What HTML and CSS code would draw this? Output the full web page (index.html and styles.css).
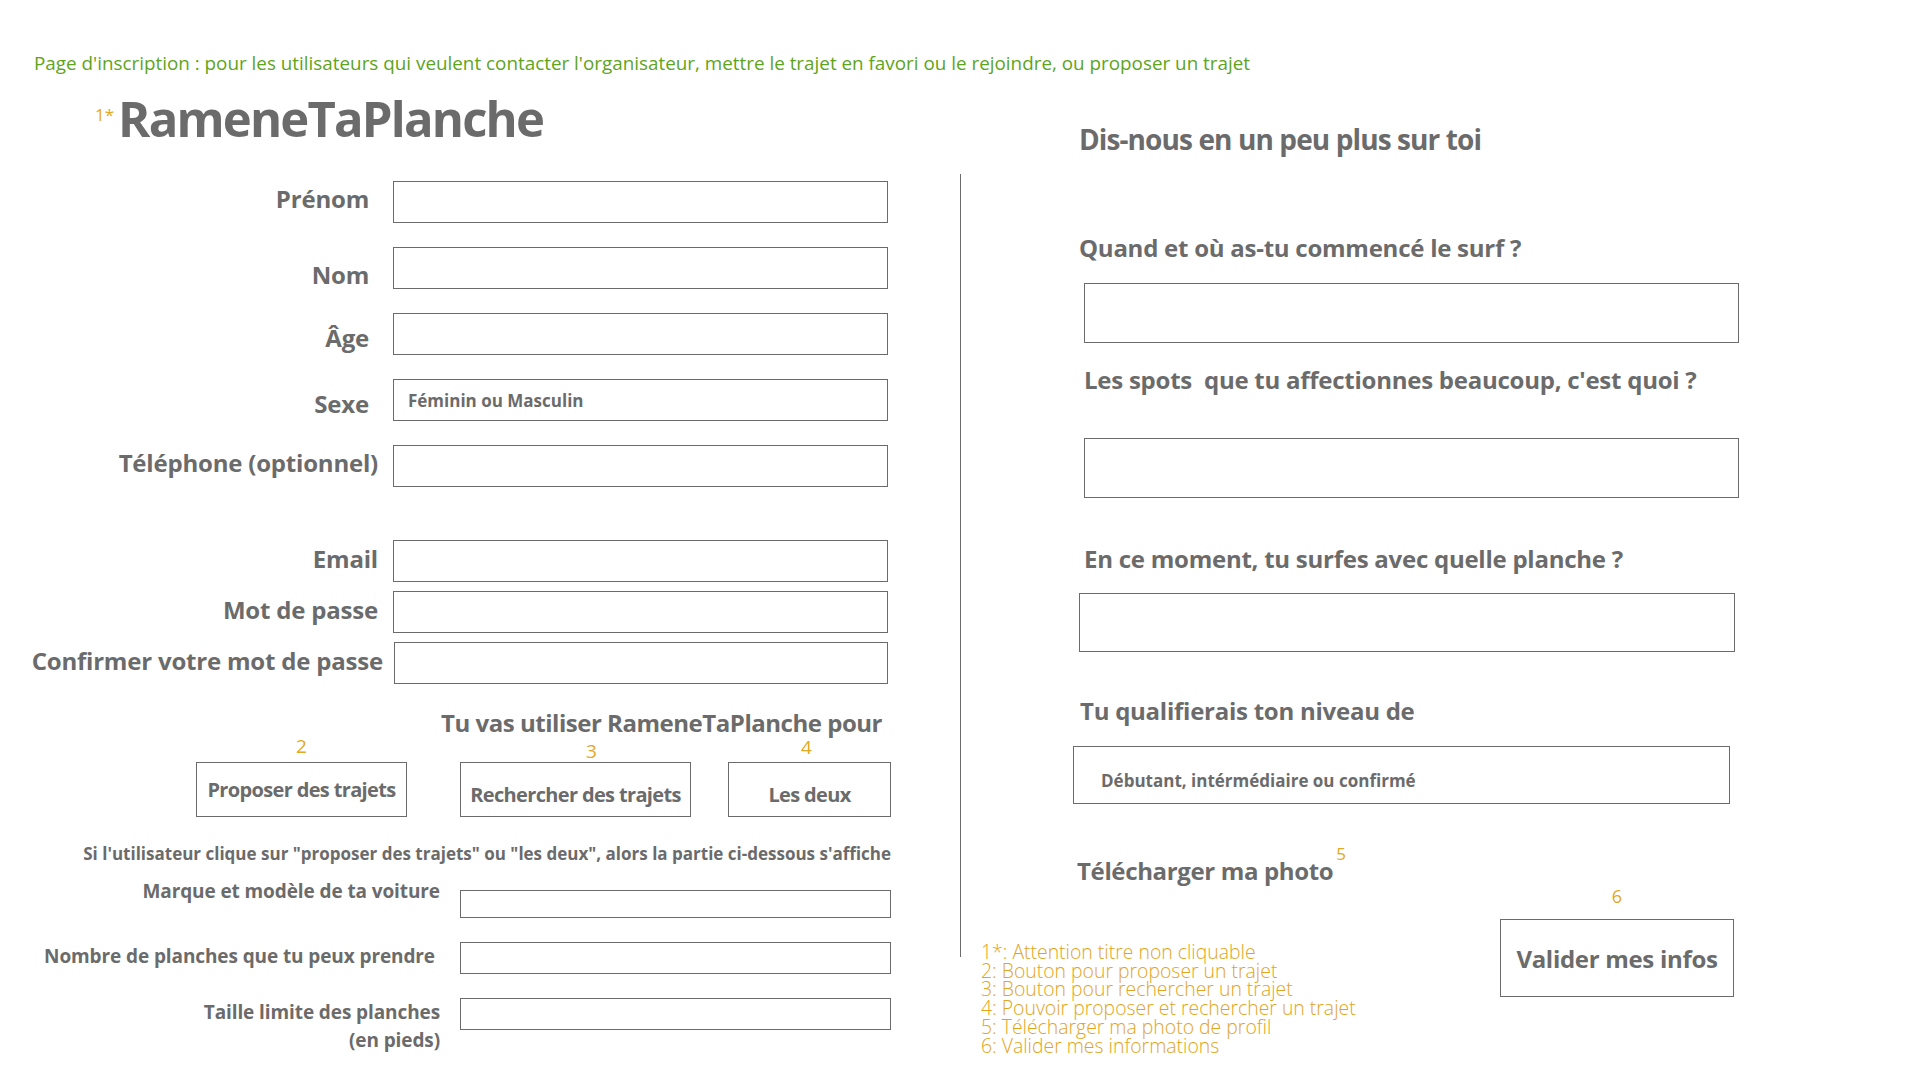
FILE: index.html
```html
<!DOCTYPE html>
<html lang="fr">
<head>
<meta charset="utf-8">
<title>RameneTaPlanche - Inscription</title>
<link rel="stylesheet" href="styles.css">
</head>
<body>
<p class="note">Page d'inscription : pour les utilisateurs qui veulent contacter l'organisateur, mettre le trajet en favori ou le rejoindre, ou proposer un trajet</p>
<main class="page">
  <section class="left">
    <div class="brand">
      <span class="mark brand-mark">1*</span>
      <h1 class="brand-title">RameneTaPlanche</h1>
    </div>

    <div class="fields">
      <div class="row"><span class="lbl">Prénom</span><div class="field"></div></div>
      <div class="row"><span class="lbl lbl-lower">Nom</span><div class="field"></div></div>
      <div class="row"><span class="lbl lbl-low">Âge</span><div class="field"></div></div>
      <div class="row"><span class="lbl lbl-low">Sexe</span><div class="field"><span class="ph">Féminin ou Masculin</span></div></div>
      <div class="row"><span class="lbl lbl-tel">Téléphone (optionnel)</span><div class="field"></div></div>
    </div>

    <div class="fields fields-tight">
      <div class="row"><span class="lbl lbl-wide">Email</span><div class="field"></div></div>
      <div class="row"><span class="lbl lbl-wide">Mot de passe</span><div class="field"></div></div>
      <div class="row"><span class="lbl lbl-wide lbl-confirm">Confirmer votre mot de passe</span><div class="field field-confirm"></div></div>
    </div>

    <h2 class="usage">Tu vas utiliser RameneTaPlanche pour</h2>

    <div class="choices">
      <div class="choice choice-1">
        <span class="mark num num-1">2</span>
        <div class="btn btn-1">Proposer des trajets</div>
      </div>
      <div class="choice choice-2">
        <span class="mark num num-2">3</span>
        <div class="btn btn-2">Rechercher des trajets</div>
      </div>
      <div class="choice choice-3">
        <span class="mark num num-3">4</span>
        <div class="btn btn-3">Les deux</div>
      </div>
    </div>

    <p class="hint">Si l'utilisateur clique sur "proposer des trajets" ou "les deux", alors la partie ci-dessous s'affiche</p>

    <div class="car">
      <div class="car-row car-row-1"><span class="car-lbl">Marque et modèle de ta voiture</span><div class="field car-field car-field-1"></div></div>
      <div class="car-row"><span class="car-lbl car-lbl-2">Nombre de planches que tu peux prendre</span><div class="field car-field"></div></div>
      <div class="car-row"><span class="car-lbl">Taille limite des planches<br>(en pieds)</span><div class="field car-field"></div></div>
    </div>
  </section>

  <div class="sep"></div>

  <section class="right">
    <h2 class="r-title">Dis-nous en un peu plus sur toi</h2>

    <h3 class="q q-1">Quand et où as-tu commencé le surf ?</h3>
    <div class="field big big-1"></div>

    <h3 class="q q-2">Les spots&nbsp; que tu affectionnes beaucoup, c'est quoi ?</h3>
    <div class="field big big-2"></div>

    <h3 class="q q-3">En ce moment, tu surfes avec quelle planche ?</h3>
    <div class="field big big-3"></div>

    <h3 class="q q-4">Tu qualifierais ton niveau de</h3>
    <div class="field big big-4"><span class="ph ph-level">Débutant, intérmédiaire ou confirmé</span></div>

    <div class="photo">
      <h3 class="photo-title">Télécharger ma photo</h3>
      <span class="mark photo-mark">5</span>
    </div>

    <div class="bottom">
      <ul class="legend">
        <li>1*: Attention titre non cliquable</li>
        <li>2: Bouton pour proposer un trajet</li>
        <li>3: Bouton pour rechercher un trajet</li>
        <li>4: Pouvoir proposer et rechercher un trajet</li>
        <li>5: Télécharger ma photo de profil</li>
        <li>6: Valider mes informations</li>
      </ul>
      <div class="submit">
        <span class="mark submit-mark">6</span>
        <div class="submit-btn">Valider mes infos</div>
      </div>
    </div>
  </section>
</main>
</body>
</html>
```

FILE: styles.css
```css
* { box-sizing: border-box; }

html, body {
  margin: 0;
  padding: 0;
  background: #ffffff;
}

body {
  font-family: "Open Sans", "Noto Sans", sans-serif;
  color: #6b6b6b;
  width: 1920px;
  height: 1080px;
  overflow: hidden;
  padding-top: 55px;
}

h1, h2, h3, p, ul { margin: 0; padding: 0; }

.note {
  margin-left: 34px;
  font-size: 18.85px;
  line-height: 17px;
  color: #5ea41c;
  white-space: nowrap;
}

.page {
  display: grid;
  grid-template-columns: 960px 1px 1fr;
  align-items: start;
}

.mark {
  color: #e3a823;
  font-weight: 400;
  line-height: 1;
}

/* ---------- left column ---------- */
.left {
  display: flex;
  flex-direction: column;
  align-items: flex-start;
}

.brand {
  display: flex;
  align-items: flex-start;
  gap: 4px;
  margin-top: 21.5px;
  margin-left: 95px;
}

.brand-mark {
  font-size: 17px;
  margin-top: 12px;
}

.brand-title {
  font-size: 49px;
  line-height: 1;
  font-weight: 700;
  letter-spacing: -1.8px;
  color: #6b6b6b;
  white-space: nowrap;
}

.fields {
  display: flex;
  flex-direction: column;
  gap: 24px;
  margin-top: 38.5px;
}

.fields-tight {
  gap: 9px;
  margin-top: 53px;
}

.row {
  display: grid;
  grid-template-columns: 369px 495px;
  column-gap: 24px;
  align-items: start;
}

.lbl {
  font-size: 24px;
  line-height: 1;
  font-weight: 700;
  letter-spacing: -0.2px;
  text-align: right;
  white-space: nowrap;
  margin-top: 6px;
}

.lbl-low { margin-top: 12.5px; }
.lbl-lower { margin-top: 15.5px; }
.lbl-tel { margin-right: -9px; }
.lbl-wide { margin-right: -9px; margin-top: 6.5px; }
.lbl-confirm { margin-right: -14px; }
.field-confirm { margin-left: 1px; }

.field {
  border: 1px solid #6b6b6b;
  height: 42px;
  background: #fff;
}

.ph {
  display: block;
  font-size: 17px;
  line-height: 1;
  font-weight: 700;
  padding-left: 14px;
  padding-top: 11.9px;
  white-space: nowrap;
}

.usage {
  font-size: 24px;
  line-height: 1;
  font-weight: 700;
  letter-spacing: -0.47px;
  margin-top: 26.7px;
  margin-left: 441px;
  white-space: nowrap;
}

.choices {
  display: flex;
  align-items: flex-start;
  margin-top: 2.3px;
}

.choice {
  display: flex;
  flex-direction: column;
  align-items: stretch;
}

.choice-1 { margin-left: 196px; }
.choice-2 { margin-left: 53px; }
.choice-3 { margin-left: 37px; }

.num {
  font-size: 19px;
  text-align: center;
}

.num-1 { margin-bottom: 6px; }
.num-2 { margin-top: 5px; margin-bottom: 1px; padding-left: 32px; }
.num-3 { margin-top: 1px; margin-bottom: 5px; padding-right: 6px; }

.btn {
  border: 1px solid #6b6b6b;
  height: 55px;
  font-size: 20px;
  line-height: 1;
  font-weight: 700;
  letter-spacing: -0.65px;
  text-align: center;
  white-space: nowrap;
  padding-top: 22px;
}

.btn-1 { width: 211px; padding-top: 17px; }
.btn-2 { width: 231px; }
.btn-3 { width: 163px; }

.hint {
  width: 891px;
  font-size: 17px;
  line-height: 1;
  font-weight: 700;
  text-align: right;
  white-space: nowrap;
  margin-top: 28px;
}

.car {
  display: flex;
  flex-direction: column;
  gap: 24px;
  margin-top: 14.7px;
}

.car-row {
  display: grid;
  grid-template-columns: 440px 431px;
  column-gap: 20px;
  align-items: start;
}

.car-lbl {
  font-size: 19px;
  line-height: 28px;
  font-weight: 700;
  letter-spacing: -0.1px;
  text-align: right;
  white-space: nowrap;
}

.car-lbl-2 { margin-right: 5px; }

.car-field { height: 32px; }
.car-field-1 { height: 28px; margin-top: 13.3px; }

/* ---------- separator ---------- */
.sep {
  width: 1px;
  height: 783px;
  margin-top: 102px;
  background: #6b6b6b;
}

/* ---------- right column ---------- */
.right {
  display: flex;
  flex-direction: column;
  align-items: flex-start;
  padding-left: 20px;
}

.r-title {
  font-size: 28px;
  line-height: 1;
  font-weight: 700;
  letter-spacing: -0.9px;
  margin-top: 53.1px;
  margin-left: 98px;
  white-space: nowrap;
}

.q {
  font-size: 24px;
  line-height: 1;
  font-weight: 700;
  letter-spacing: -0.25px;
  white-space: nowrap;
}

.q-1 { margin-top: 82.6px; margin-left: 98px; }
.q-2 { margin-top: 24.7px; margin-left: 103px; }
.q-3 { margin-top: 48.7px; margin-left: 103px; }
.q-4 { margin-top: 46.7px; margin-left: 99px; }

.big {
  width: 655px;
  height: 60px;
}

.big-1 { margin-top: 23.3px; margin-left: 103px; }
.big-2 { margin-top: 46.3px; margin-left: 103px; }
.big-3 { margin-top: 22.3px; margin-left: 98px; width: 656px; height: 59px; }
.big-4 { margin-top: 23.3px; margin-left: 92px; width: 657px; height: 58px; }

.ph-level {
  font-size: 17px;
  padding-left: 27px;
  padding-top: 24.9px;
}

.photo {
  display: flex;
  align-items: flex-start;
  margin-top: 54.7px;
  margin-left: 96px;
}

.photo-title {
  font-size: 24px;
  line-height: 1;
  font-weight: 700;
  letter-spacing: -0.35px;
  white-space: nowrap;
}

.photo-mark {
  font-size: 17px;
  margin-top: -14px;
  margin-left: 3px;
}

.bottom {
  display: flex;
  align-items: flex-start;
  margin-top: 4.2px;
}

.legend {
  list-style: none;
  width: 519px;
  margin-top: 56px;
  font-size: 19.4px;
  line-height: 18.8px;
  font-weight: 300;
  color: #e2a41c;
  white-space: nowrap;
}

.submit {
  display: flex;
  flex-direction: column;
  align-items: stretch;
}

.submit-mark {
  font-size: 18px;
  text-align: center;
  margin-bottom: 14.1px;
}

.submit-btn {
  width: 234px;
  height: 78px;
  border: 1px solid #6b6b6b;
  font-size: 24px;
  line-height: 1;
  font-weight: 700;
  letter-spacing: -0.3px;
  text-align: center;
  padding-top: 26.7px;
  white-space: nowrap;
}
```
